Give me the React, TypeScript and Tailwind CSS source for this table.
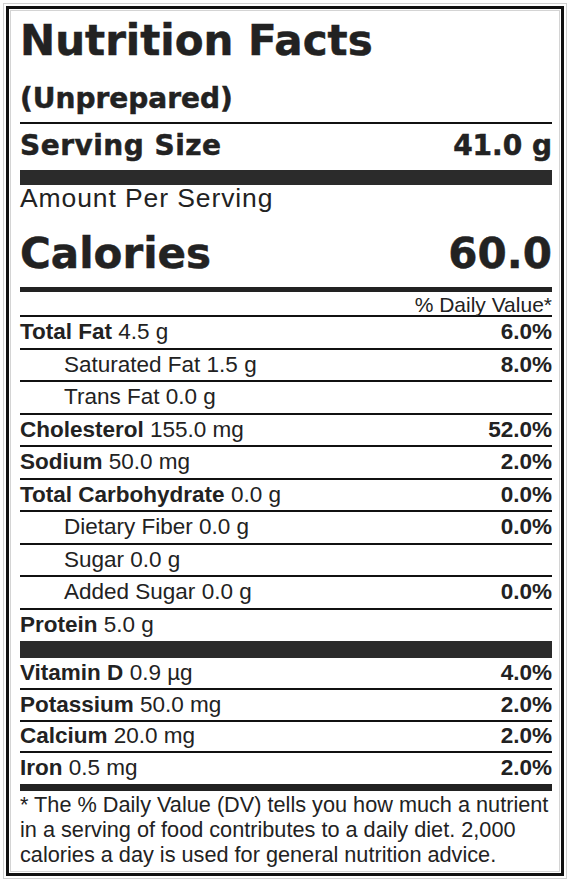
const rows = [
  { label: "Total Fat", amount: "4.5 g", dv: "6.0%", bold: true },
  { label: "Saturated Fat", amount: "1.5 g", dv: "8.0%", bold: false },
  { label: "Trans Fat", amount: "0.0 g", dv: "", bold: false },
  { label: "Cholesterol", amount: "155.0 mg", dv: "52.0%", bold: true },
  { label: "Sodium", amount: "50.0 mg", dv: "2.0%", bold: true },
  { label: "Total Carbohydrate", amount: "0.0 g", dv: "0.0%", bold: true },
  { label: "Dietary Fiber", amount: "0.0 g", dv: "0.0%", bold: false },
  { label: "Sugar", amount: "0.0 g", dv: "", bold: false },
  { label: "Added Sugar", amount: "0.0 g", dv: "0.0%", bold: false },
];

const vitamins = [
  { label: "Vitamin D", amount: "0.9 µg", dv: "4.0%" },
  { label: "Potassium", amount: "50.0 mg", dv: "2.0%" },
  { label: "Calcium", amount: "20.0 mg", dv: "2.0%" },
  { label: "Iron", amount: "0.5 mg", dv: "2.0%" },
];

function Row({ label, amount, dv, bold, line = true, h = "h-[32.5px]" }: { label: string; amount: string; dv: string; bold: boolean; line?: boolean; h?: string }) {
  return (
    <div className={`flex items-center justify-between ${h} ${line ? "border-b-2 border-[#111]" : ""}`}>
      <div className={`leading-[30px] ${bold ? "" : "pl-[44px]"}`}>
        <span className={bold ? "font-bold" : ""}>{label}</span> {amount}
      </div>
      <div className="font-bold leading-[30px]">{dv}</div>
    </div>
  );
}

const heavy = { fontFamily: '"DejaVu Sans", sans-serif', WebkitTextStroke: "0.5px #222" } as const;

export default function App() {
  return (
    <div className="w-[570px] h-[882px] bg-white p-[3px]" style={{ fontFamily: '"Liberation Sans", Arial, sans-serif' }}>
      <div className="h-full border border-[#d0d0d0] p-[2px]">
        <div className="h-full border-[3px] border-[#111] p-[1px]">
          <div className="h-full border border-[#d4d4d4] pl-[9px] pr-[7px] text-[#222] text-[22.5px]">
            <div className="pt-[8px] text-[42px] leading-[44px] font-bold" style={heavy}>
              Nutrition Facts
            </div>
            <div className="mt-[20px] text-[28px] leading-[32px] font-bold" style={heavy}>
              (Unprepared)
            </div>
            <div className="mt-[7px] h-[2px] bg-[#111]" />
            <div className="mt-[6px] flex items-baseline justify-between text-[28px] leading-[32px] font-bold" style={heavy}>
              <span className="tracking-[0.5px]">Serving Size</span>
              <span>41.0 g</span>
            </div>
            <div className="mt-[8px] h-[15px] bg-[#2b2b2b]" />
            <div className="mt-[1px] text-[26.5px] leading-[24px] tracking-[0.9px]">Amount Per Serving</div>
            <div className="mt-[22px] flex items-baseline justify-between text-[42px] leading-[44px] font-bold" style={heavy}>
              <span>Calories</span>
              <span>60.0</span>
            </div>
            <div className="mt-[11px] h-[5px] bg-[#222]" />
            <div className="h-[25px] border-b-2 border-[#111] pt-[2px] text-right text-[21px] leading-[21px]">
              % Daily Value*
            </div>
            {rows.map((r) => (
              <Row key={r.label} {...r} />
            ))}
            <Row label="Protein" amount="5.0 g" dv="" bold line={false} h="h-[31px]" />
            <div className="h-[17px] bg-[#2b2b2b]" />
            {vitamins.map((v, i) => (
              <Row key={v.label} {...v} bold line={i < 3} h={i < 2 ? "h-[32px]" : "h-[31px]"} />
            ))}
            <div className="h-[7px] bg-[#222]" />
            <div className="pt-[1px] whitespace-nowrap text-[21.7px] leading-[25px]">
              * The % Daily Value (DV) tells you how much a nutrient
              <br />
              in a serving of food contributes to a daily diet. 2,000
              <br />
              calories a day is used for general nutrition advice.
            </div>
          </div>
        </div>
      </div>
    </div>
  );
}
